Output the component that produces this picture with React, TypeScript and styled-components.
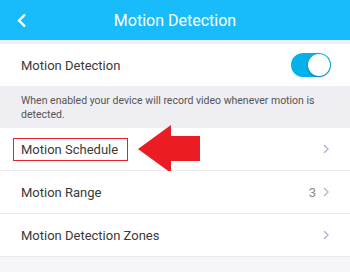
import React from "react";
import styled, { createGlobalStyle } from "styled-components";

const GlobalStyle = createGlobalStyle`
  html, body {
    margin: 0;
    padding: 0;
    background: #f6f6f8;
    font-family: Roboto, "Noto Sans", sans-serif;
  }
`;

const Page = styled.div`
  width: 350px;
  height: 272px;
  overflow: hidden;
  background: #f6f6f8;
`;

const Header = styled.div`
  height: 40px;
  background: #18bcfa;
  display: flex;
  align-items: center;
  justify-content: center;
  position: relative;
  color: #fff;
  font-size: 16px;
`;

const Back = styled.svg`
  position: absolute;
  left: 16px;
  top: 13px;
`;

const Spacer = styled.div`
  height: 4px;
  background: #eeeef3;
`;

const Row = styled.div<{ $border?: boolean }>`
  height: 42px;
  background: #fff;
  display: flex;
  align-items: center;
  padding: 0 21px;
  position: relative;
  border-bottom: ${(p) => (p.$border ? "1px solid #ebebef" : "none")};
  font-size: 13px;
  color: #3a3a3a;
`;

const Label = styled.span`
  flex: 1;
`;

const Value = styled.span`
  color: #8a8a8a;
  margin-right: 7px;
`;

const Toggle = styled.div`
  width: 40px;
  height: 24px;
  border-radius: 12px;
  background: #05b1ea;
  position: relative;
  margin-right: -2px;
`;

const Knob = styled.div`
  position: absolute;
  right: 1px;
  top: 1px;
  width: 22px;
  height: 22px;
  border-radius: 50%;
  background: #fff;
  box-shadow: 0 1px 3px rgba(0, 0, 0, 0.3);
`;

const Note = styled.div`
  background: #eeeef3;
  padding: 8px 21px 8px;
  height: 26px;
  font-size: 10.5px;
  line-height: 14px;
  color: #555;
`;

const Highlight = styled.span`
  border: 1.5px solid #e8202b;
  padding: 3px 9px 3px 7px;
  margin-left: -8px;
`;

const Arrow = styled.svg`
  position: absolute;
  left: 137px;
  top: -3px;
`;

const Chevron = () => (
  <svg width="6" height="10" viewBox="0 0 6 10">
    <path d="M1 1 L5 5 L1 9" fill="none" stroke="#aab5d3" strokeWidth="1.3" />
  </svg>
);

export default function App() {
  return (
    <Page>
      <GlobalStyle />
      <Header>
        <Back width="11" height="15" viewBox="0 0 11 15">
          <path d="M9 1.5 L3 7.5 L9 13.5" fill="none" stroke="#fff" strokeWidth="2.4" />
        </Back>
        Motion Detection
      </Header>
      <Spacer />
      <Row>
        <Label>Motion Detection</Label>
        <Toggle>
          <Knob />
        </Toggle>
      </Row>
      <Note>When enabled your device will record video whenever motion is detected.</Note>
      <Row $border>
        <Label>
          <Highlight>Motion Schedule</Highlight>
        </Label>
        <Arrow width="64" height="50" viewBox="0 0 64 50">
          <polygon points="1,24 34,0 34,11 63,11 63,36 34,36 34,48" fill="#ec1c24" />
        </Arrow>
        <Chevron />
      </Row>
      <Row $border>
        <Label>Motion Range</Label>
        <Value>3</Value>
        <Chevron />
      </Row>
      <Row $border>
        <Label>Motion Detection Zones</Label>
        <Chevron />
      </Row>
    </Page>
  );
}
